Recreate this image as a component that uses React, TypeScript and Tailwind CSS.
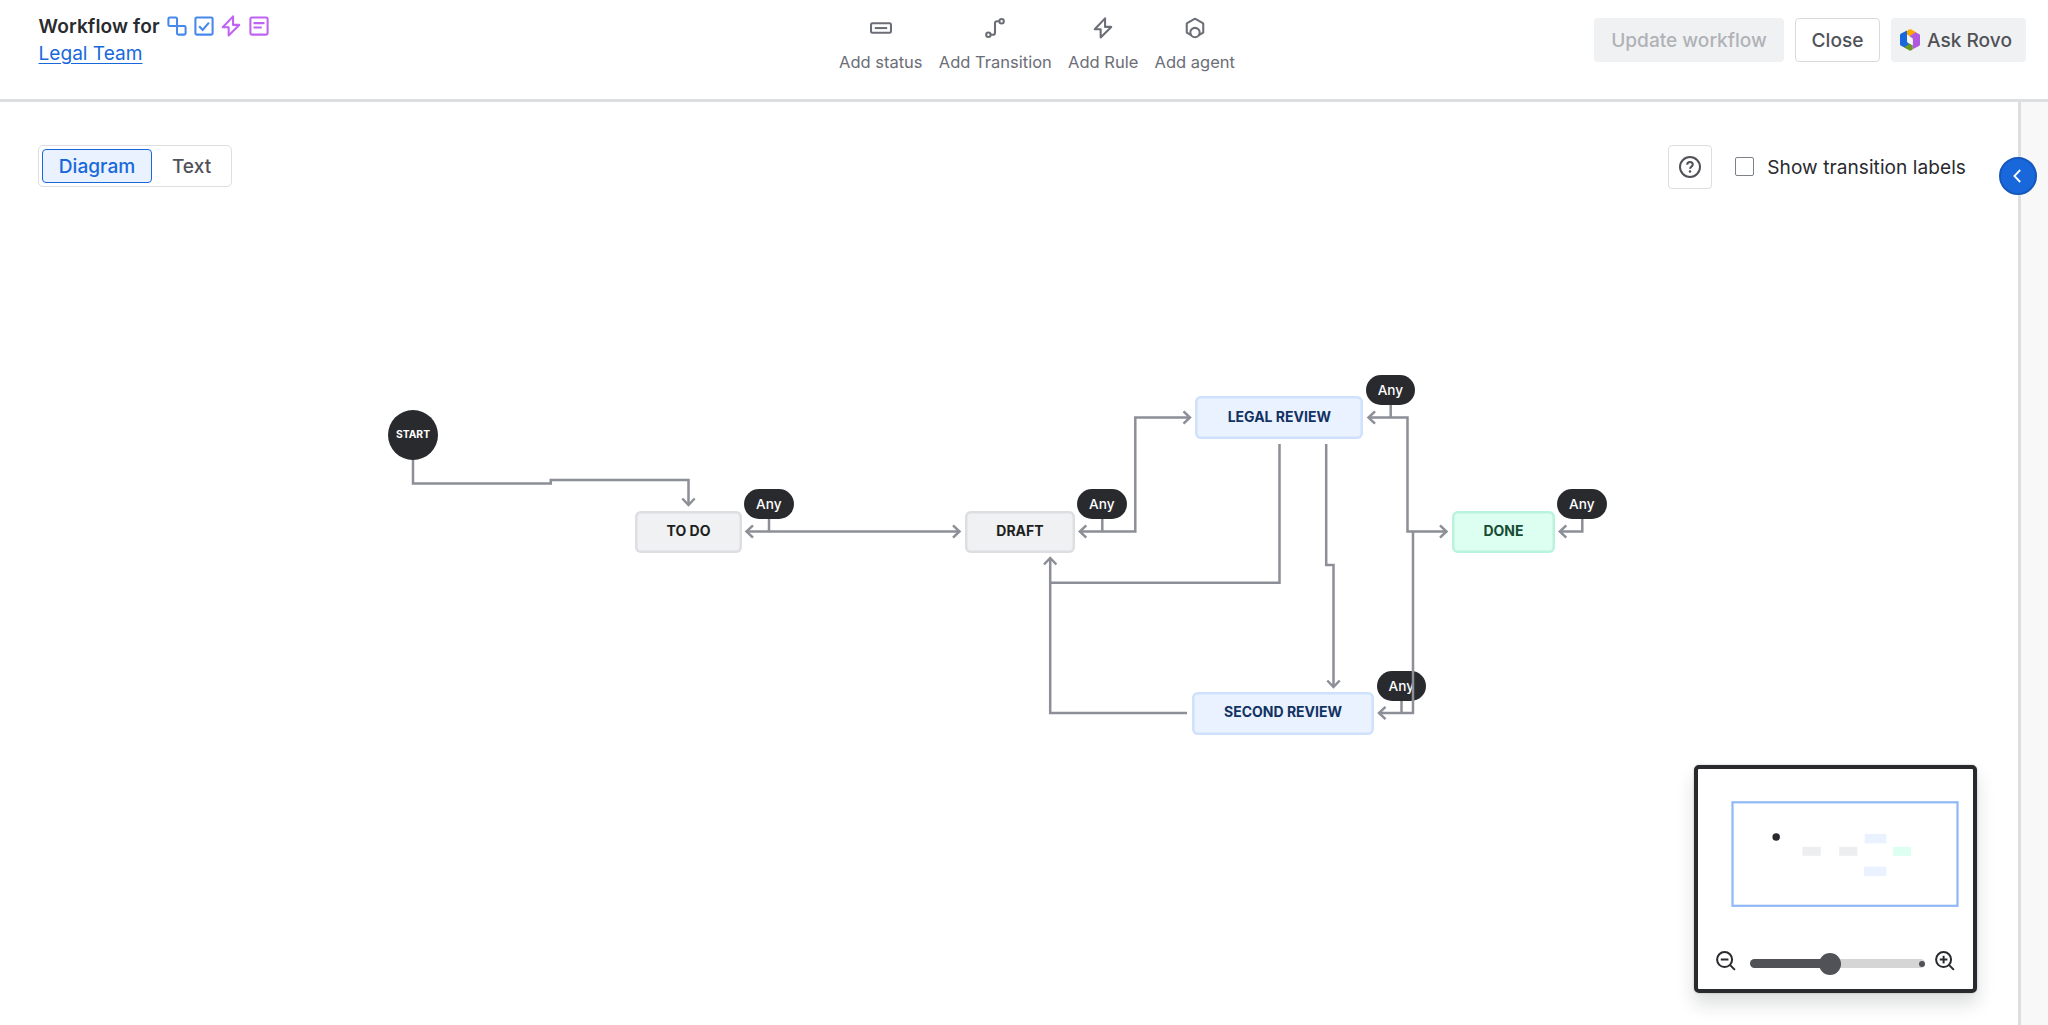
import type { ReactNode } from "react";

type IconProps = { className?: string; children: ReactNode };

/* 16-unit icon frame with a 1.5-unit outline. */
function Icon({ className = "", children }: IconProps) {
  return (
    <svg
      viewBox="0 0 16 16"
      fill="none"
      stroke="currentColor"
      strokeWidth="1.5"
      className={`size-[22px] shrink-0 ${className}`}
    >
      {children}
    </svg>
  );
}

function BoltIcon({ className }: { className?: string }) {
  return (
    <Icon className={className}>
      <path d="M9.500 1 2 8.900H6.300v6L14 7.200H9.500V1Z" strokeLinejoin="round" />
    </Icon>
  );
}

function WorkTypeIcons() {
  return (
    <div className="flex items-center gap-[5.400px]">
      <Icon className="text-[#4688EC]">
        <rect x="1.75" y="1.75" width="6.25" height="6.25" rx="1" />
        <rect x="8" y="8" width="6.25" height="6.25" rx="1" />
      </Icon>
      <Icon className="text-[#4688EC]">
        <rect x="1.75" y="1.75" width="12.5" height="12.5" rx="1" />
        <path d="m4.5 8.2 2.5 2.6 4.6-5.3" />
      </Icon>
      <BoltIcon className="text-[#BF63F3]" />
      <Icon className="text-[#BF63F3]">
        <rect x="1.75" y="1.75" width="12.5" height="12.5" rx="1" />
        <path d="M4 5.9h8M4 9.1h6" />
      </Icon>
    </div>
  );
}

function ToolbarAction({ label, icon }: { label: string; icon: ReactNode }) {
  return (
    <button className="flex flex-col items-center gap-[12px] text-[#6B6E76]">
      {icon}
      <span className="text-[16.500px] leading-[22px] whitespace-nowrap">{label}</span>
    </button>
  );
}

function RovoLogo() {
  return (
    <svg viewBox="0 0 20 22" className="h-[22px] w-[20px] shrink-0">
      <path d="M0 6.200q0-1 1-1.600L7 1.400V13l4.200 3.200v1.200L7 19.700 1 16.800Q0 16.200 0 15.200Z" fill="#1868DB" />
      <path d="M7 2 9 .6q1.200-.7 2.400 0L16.500 3.500 10.500 7.600 7 5.600Z" fill="#FCA700" />
      <path d="M20 6.200v9q0 1-1 1.700l-6.500 3.300V9.200L9.500 7.300 15.500 3.200l3.500 1.700q1 .5 1 1.300Z" fill="#AF59E1" />
      <path d="M4 18.300 10 14.600l2.600 1.800v4L11.400 21.300q-1.200.7-2.400 0Z" fill="#6A9A23" />
      <path d="M7.300 6.600 9.500 7.900q.8.500 2.300 1.400 1 .6 1 1.600v5.300L9.200 14q-1.900-1.100-1.900-2.600Z" fill="#F4F5F7" />
    </svg>
  );
}

function Header() {
  return (
    <header className="flex h-[102px] shrink-0 justify-between border-b-[3px] border-[#DDDEDF] pr-[22px] pl-[38.500px]">
      <div className="w-[569.500px] pt-[12px]">
        <div className="flex h-[28px] items-center gap-[6px]">
          <h1 className="text-[19.1px] font-semibold tracking-[0.12px] text-[#292A2E]">Workflow for</h1>
          <WorkTypeIcons />
        </div>
        <a className="block text-[19.1px] leading-[27px] text-[#1868DB] underline underline-offset-[3px]">Legal Team</a>
      </div>

      <nav className="flex gap-[16.300px] pt-[17px]">
        <ToolbarAction
          label="Add status"
          icon={
            <Icon>
              <rect x="0.75" y="4.600" width="14.500" height="6.900" rx="1" />
              <path d="M3.500 8.050h9" />
            </Icon>
          }
        />
        <ToolbarAction
          label="Add Transition"
          icon={
            <Icon>
              <circle cx="3.200" cy="12.900" r="1.600" />
              <circle cx="12.800" cy="3.100" r="1.600" />
              <path d="M4.800 12.900h1.700q1.500 0 1.500-1.500V4.600q0-1.500 1.500-1.500h1.700" />
            </Icon>
          }
        />
        <ToolbarAction label="Add Rule" icon={<BoltIcon />} />
        <ToolbarAction
          label="Add agent"
          icon={
            <Icon>
              <path d="M5.600 13.400 2.300 11.500a.6.600 0 0 1-.3-.5V4.900a.6.600 0 0 1 .3-.5L7.700 1.400a.6.600 0 0 1 .6 0l5.400 3a.6.600 0 0 1 .3.500v6.100a.6.600 0 0 1-.3.500l-3.300 1.900" />
              <circle cx="8" cy="11.300" r="3.400" />
            </Icon>
          }
        />
      </nav>

      <div className="flex w-[560px] justify-end gap-[11px] pt-[18px] text-[19.1px] font-medium">
        <button className="h-[44px] w-[190px] rounded-[4px] bg-[#F0F1F2] text-[#B0B2B8]">Update workflow</button>
        <button className="h-[44px] w-[85px] rounded-[4px] border border-[#D9DADD] text-[#505258]">Close</button>
        <button className="flex h-[44px] w-[135px] items-center gap-[7px] rounded-[4px] bg-[#F0F1F2] pl-[9px] whitespace-nowrap text-[#505258]">
          <RovoLogo />
          Ask Rovo
        </button>
      </div>
    </header>
  );
}

function ViewToolbar() {
  return (
    <div className="relative flex items-start justify-between pt-[43px] pr-[52px] pl-[38px]">
      <div className="flex h-[42px] w-[194px] rounded-[5px] border border-[#DDDEE1] p-[3px] text-[19.1px] font-medium">
        <button className="w-[110px] rounded-[4px] border border-[#1868DB] bg-[#E9F2FE] text-[#1868DB]">Diagram</button>
        <button className="flex-1 pl-[3px] text-[#505258]">Text</button>
      </div>
      <div className="flex items-center">
        <button className="flex size-[44px] items-center justify-center rounded-[4px] border border-[#DDDEE1] text-[#505258]">
          <svg viewBox="0 0 22 22" fill="none" stroke="currentColor" strokeWidth="2" className="size-[22px]">
            <circle cx="11" cy="11" r="10" />
            <path d="M8.200 8.700c0-1.600 1.200-2.600 2.800-2.600s2.800 1 2.800 2.500c0 2-2.800 2-2.800 4.200" />
            <circle cx="11" cy="15.600" r="1.250" fill="currentColor" stroke="none" />
          </svg>
        </button>
        <label className="ml-[23px] flex items-center gap-[13px] text-[19.1px] tracking-[0.05px] text-[#292A2E]">
          <span className="size-[19px] rounded-[2px] border border-[#7D818A] bg-white" />
          Show transition labels
        </label>
      </div>
    </div>
  );
}

const connectors = [
  "M413 459V483.500H550.800V480H688.500V504.500",
  "M747 531.500H959",
  "M1080 531.500H1135.300V417.500H1189.500",
  "M1369 417.500H1407.500V531.500H1446",
  "M1560 531.500H1582.300V518",
  "M1279.500 444V582.700H1050.200",
  "M1187 713H1050.200V559",
  "M1326.200 444V565H1333.500V686",
  "M769 518V531.500",
  "M1102.300 518V531.500",
  "M1390.700 404V417.500",
  "M1401.500 700V713",
];

const reviewToDone = "M1380 713H1413V531.500";

const arrowHeads = [
  "M682.300 498.500 688.500 505 694.700 498.500",
  "M753 525.300 746.500 531.500 753 537.700",
  "M953 525.300 959.500 531.500 953 537.700",
  "M1086.300 525.300 1079.800 531.500 1086.300 537.700",
  "M1183.500 411.300 1190 417.500 1183.500 423.700",
  "M1375 411.300 1368.500 417.500 1375 423.700",
  "M1440 525.300 1446.500 531.500 1440 537.700",
  "M1566.300 525.300 1559.800 531.500 1566.300 537.700",
  "M1044 564.500 1050.200 558 1056.400 564.500",
  "M1327.300 680.500 1333.500 687 1339.700 680.500",
  "M1385.500 706.800 1379 713 1385.500 719.200",
];

const statuses = [
  {
    label: "TO DO",
    box: "left-[635px] top-[408.500px] w-[107px]",
    tone: "shadow-[inset_0_0_0_2.500px_#DDDEE1] bg-[#F0F1F2] text-[#1E1F21]",
  },
  {
    label: "DRAFT",
    box: "left-[964.700px] top-[408.500px] w-[110.500px]",
    tone: "shadow-[inset_0_0_0_2.500px_#DDDEE1] bg-[#F0F1F2] text-[#1E1F21]",
  },
  {
    label: "LEGAL REVIEW",
    box: "left-[1195.300px] top-[294.300px] w-[168px]",
    tone: "shadow-[inset_0_0_0_2.500px_#CFE1FD] bg-[#E9F2FE] text-[#123263]",
  },
  {
    label: "SECOND REVIEW",
    box: "left-[1192px] top-[590px] w-[182px]",
    tone: "shadow-[inset_0_0_0_2.500px_#CFE1FD] bg-[#E9F2FE] text-[#123263]",
  },
  {
    label: "DONE",
    box: "left-[1451.700px] top-[408.500px] w-[103.500px]",
    tone: "shadow-[inset_0_0_0_2.500px_#BAF3DB] bg-[#DCFFF1] text-[#164B35]",
  },
];

const anyBadges = [
  "left-[744px] top-[387.300px]",
  "left-[1077px] top-[387.300px]",
  "left-[1365.700px] top-[273.300px]",
  "left-[1376.500px] top-[569.300px]",
  "left-[1557px] top-[387.300px]",
];

function Wires({ paths }: { paths: string[] }) {
  return (
    <svg
      viewBox="0 102 2018 923"
      fill="none"
      stroke="#8C8F97"
      strokeWidth="2.500"
      className="absolute top-0 left-0 h-[923px] w-[2018px]"
    >
      {paths.map((d) => (
        <path key={d} d={d} />
      ))}
    </svg>
  );
}

function Diagram() {
  return (
    <div className="absolute inset-0">
      <Wires paths={[...connectors, ...arrowHeads]} />
      <div className="absolute top-[308px] left-[388px] flex size-[50px] items-center justify-center rounded-full bg-[#292A2E] text-[10.300px] font-bold text-white">
        START
      </div>
      {statuses.map((s) => (
        <div
          key={s.label}
          className={`absolute flex h-[42.500px] items-center justify-center rounded-[6px] pb-[3px] text-[14px] font-bold whitespace-nowrap ${s.box} ${s.tone}`}
        >
          {s.label}
        </div>
      ))}
      {anyBadges.map((position) => (
        <div
          key={position}
          className={`absolute flex h-[30px] w-[49.500px] items-center justify-center rounded-full bg-[#292A2E] text-[13.600px] font-medium text-white ${position}`}
        >
          Any
        </div>
      ))}
      <Wires paths={[reviewToDone]} />
    </div>
  );
}

function Magnifier({ plus = false }: { plus?: boolean }) {
  return (
    <svg viewBox="0 0 20 20" fill="none" stroke="#292A2E" strokeWidth="2" className="size-[20px] shrink-0">
      <circle cx="8.600" cy="8.600" r="7.500" />
      <path d="m13.900 13.900 5 5M4.800 8.600h7.600" />
      {plus && <path d="M8.600 4.800v7.600" />}
    </svg>
  );
}

function MiniMap() {
  return (
    <div className="absolute top-[662.500px] left-[1694px] flex h-[228px] w-[283px] flex-col justify-end rounded-[5px] border-4 border-[#292A2E] bg-white shadow-[0_11px_18px_rgba(30,31,33,0.15),0_0_2px_rgba(30,31,33,0.3)]">
      <svg viewBox="1698 768.500 275 150" className="h-[150px] w-[275px]">
        <rect x="1732.500" y="801.800" width="225" height="103.500" fill="none" stroke="#8FB8F6" strokeWidth="2.200" />
        <circle cx="1776.200" cy="836.500" r="3.800" fill="#292A2E" />
        <rect x="1802.300" y="846.300" width="18.500" height="9" fill="#EDEEF0" />
        <rect x="1839.200" y="846.300" width="18.200" height="9" fill="#EDEEF0" />
        <rect x="1864.700" y="833.300" width="21.600" height="9.500" fill="#E9F2FE" />
        <rect x="1893" y="846.300" width="18" height="9" fill="#DCFFF1" />
        <rect x="1864" y="866.200" width="22.300" height="9.500" fill="#E9F2FE" />
      </svg>
      <div className="flex h-[70px] items-start pt-[32.500px] pl-[18px]">
        <Magnifier />
        <div className="mt-[1px] ml-[14px] flex h-[23px] w-[175px] items-center">
          <div className="h-[9px] w-[72px] rounded-l-full bg-[#505258]" />
          <div className="relative z-10 -mr-[3px] -ml-[3px] size-[22px] shrink-0 rounded-full bg-[#505258]" />
          <div className="flex h-[9px] flex-1 items-center justify-end rounded-r-full bg-[#D5D5D5]">
            <span className="size-[6px] rounded-full bg-[#505258]" />
          </div>
        </div>
        <div className="ml-[10px]">
          <Magnifier plus />
        </div>
      </div>
    </div>
  );
}

export default function App() {
  return (
    <div className="flex h-[1025px] w-[2048px] flex-col overflow-hidden bg-white font-['Inter',sans-serif]">
      <Header />
      <div className="relative flex min-h-0 flex-1">
        <main className="relative w-[2018px] shrink-0">
          <Diagram />
          <ViewToolbar />
          <MiniMap />
        </main>
        <aside className="flex-1 border-l-[3px] border-[#DDDEDF] bg-[#F8F8F8]" />
        <button className="absolute top-[54.500px] left-[1998.700px] flex size-[38px] items-center justify-center rounded-full border-2 border-[#1558BC] bg-[#1868DB]">
          <svg viewBox="0 0 16 16" fill="none" stroke="white" strokeWidth="1.800" className="size-[16px]">
            <path d="M10.200 2 4.400 8l5.800 6" />
          </svg>
        </button>
      </div>
    </div>
  );
}
